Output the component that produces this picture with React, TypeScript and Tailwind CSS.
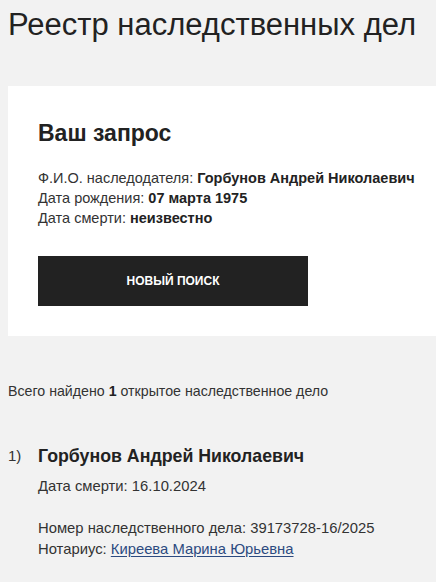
const requestRows = [
  { label: "Ф.И.О. наследодателя:", value: "Горбунов Андрей Николаевич" },
  { label: "Дата рождения:", value: "07 марта 1975" },
  { label: "Дата смерти:", value: "неизвестно" },
];

export default function App() {
  return (
    <main className="min-h-screen overflow-hidden bg-[#f2f2f2] pl-2 pt-2 font-['Liberation_Sans',Arial,sans-serif] text-[#222]">
      <h1 className="text-[31px] leading-[34px] font-normal">Реестр наследственных дел</h1>

      <section className="mt-[44px] bg-white pl-[30px] pt-[34px] pb-[30px]">
        <h2 className="text-[23px] leading-[26px] font-bold">Ваш запрос</h2>
        <div className="mt-[22px] text-[14.5px] leading-[20px] text-[#333]">
          {requestRows.map((row) => (
            <p key={row.label}>
              {row.label} <b className="font-bold text-[#222]">{row.value}</b>
            </p>
          ))}
        </div>
        <button
          type="button"
          className="mt-[28px] flex h-[50px] w-[270px] items-center justify-center bg-[#222] text-[12px] font-bold text-white"
        >
          НОВЫЙ ПОИСК
        </button>
      </section>

      <p className="mt-[45px] text-[14.2px] leading-[20px] text-[#333]">
        Всего найдено <b className="font-bold text-[#222]">1</b> открытое наследственное дело
      </p>

      <ol className="mt-[43px]">
        <li className="flex">
          <span className="w-[30px] text-[15px] leading-[24px] text-[#333]">1)</span>
          <div>
            <h3 className="text-[17.75px] leading-[24px] font-bold">Горбунов Андрей Николаевич</h3>
            <p className="mt-[8px] text-[14.8px] leading-[20px] text-[#333]">Дата смерти: 16.10.2024</p>
            <div className="mt-[22px] text-[14.8px] leading-[20.5px] text-[#333]">
              <p>Номер наследственного дела: 39173728-16/2025</p>
              <p>
                Нотариус:{" "}
                <a href="#" className="text-[#2c4a80] underline underline-offset-2">
                  Киреева Марина Юрьевна
                </a>
              </p>
            </div>
          </div>
        </li>
      </ol>
    </main>
  );
}
